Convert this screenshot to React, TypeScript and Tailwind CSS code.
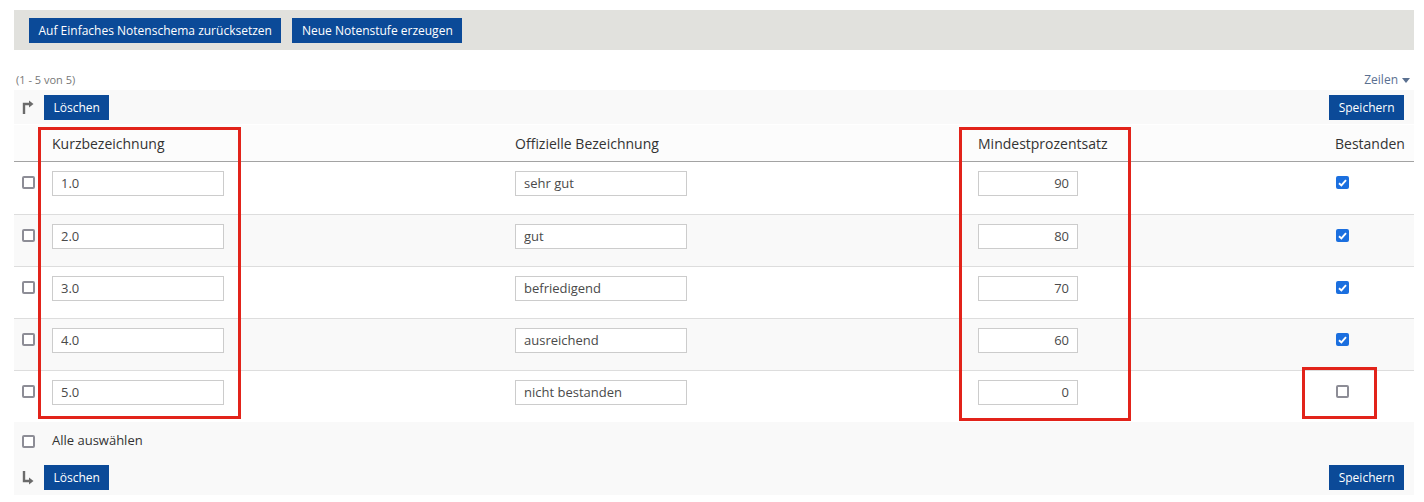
import React from "react";

const rows = [
  { k: "1.0", o: "sehr gut", m: "90", b: true, bg: "bg-white" },
  { k: "2.0", o: "gut", m: "80", b: true, bg: "bg-[#f9f9f9]" },
  { k: "3.0", o: "befriedigend", m: "70", b: true, bg: "bg-white" },
  { k: "4.0", o: "ausreichend", m: "60", b: true, bg: "bg-[#f9f9f9]" },
  { k: "5.0", o: "nicht bestanden", m: "0", b: false, bg: "bg-white" },
];

const Btn = ({ children }: { children: React.ReactNode }) => (
  <button className="h-[25px] px-[9.5px] bg-[#0b4a98] text-white text-[12px] leading-[25px] whitespace-nowrap">
    {children}
  </button>
);

const Cb = ({ checked = false }: { checked?: boolean }) =>
  checked ? (
    <span className="block w-[13px] h-[13px] rounded-[2px] bg-[#1b6fdf] flex items-center justify-center">
      <svg width="9" height="8" viewBox="0 0 9 8">
        <path d="M1 4.2 L3.4 6.4 L8 1.2" stroke="white" strokeWidth="1.9" fill="none" />
      </svg>
    </span>
  ) : (
    <span className="block w-[13px] h-[13px] rounded-[2px] border-2 border-[#8d8d96] bg-white" />
  );

const ArrowUp = () => (
  <svg width="12" height="14" viewBox="0 0 12 14" className="block">
    <path d="M2 14 V4 H7" stroke="#6b6b6b" strokeWidth="2.4" fill="none" />
    <path d="M7 0.5 L11.5 4 L7 7.5 Z" fill="#6b6b6b" />
  </svg>
);

const ArrowDown = () => (
  <svg width="12" height="14" viewBox="0 0 12 14" className="block">
    <path d="M2 0 V10 H7" stroke="#6b6b6b" strokeWidth="2.4" fill="none" />
    <path d="M7 6.5 L11.5 10 L7 13.5 Z" fill="#6b6b6b" />
  </svg>
);

const inputCls =
  "h-[25px] border border-[#cccccc] bg-white text-[13px] text-[#4a4a4a] px-2 outline-none";

export default function App() {
  return (
    <div
      className="relative w-[1424px] h-[502px] bg-white pl-[14px] pr-[10px] pt-[10px] text-[#333]"
      style={{ fontFamily: '"Open Sans", "Noto Sans", sans-serif' }}
    >
      {/* toolbar */}
      <div className="h-[40px] bg-[#e1e1dd] flex items-center gap-[11px] px-[15px]">
        <Btn>Auf Einfaches Notenschema zurücksetzen</Btn>
        <Btn>Neue Notenstufe erzeugen</Btn>
      </div>

      {/* info line */}
      <div className="h-[40px] flex items-end justify-between">
        <span className="text-[11px] leading-[16px] text-[#777] pl-[2px] pb-[2px]">(1 - 5 von 5)</span>
        <span className="text-[12px] leading-[16px] text-[#5a7090] flex items-center gap-[4px] pr-[4px] pb-[2px]">
          Zeilen
          <svg width="8" height="5" viewBox="0 0 8 5">
            <path d="M0 0 H8 L4 5 Z" fill="#5a7090" />
          </svg>
        </span>
      </div>

      {/* top actions */}
      <div className="h-[34px] bg-[#f9f9f9] flex items-center justify-between pl-[8px] pr-[10px]">
        <div className="flex items-center gap-[10px]">
          <ArrowUp />
          <Btn>Löschen</Btn>
        </div>
        <Btn>Speichern</Btn>
      </div>

      {/* header */}
      <div className="mt-[1px] h-[37px] bg-[#fcfcfc] border-b border-[#a3a3a3] grid grid-cols-[30px_463px_463px_357px_1fr] items-center text-[14px] text-[#333]">
        <div />
        <div className="pl-2">Kurzbezeichnung</div>
        <div className="pl-2">Offizielle Bezeichnung</div>
        <div className="pl-2">Mindestprozentsatz</div>
        <div className="pl-2">Bestanden</div>
      </div>

      {/* rows */}
      {rows.map((r, i) => (
        <div
          key={r.k}
          className={`h-[52px] ${r.bg} ${i > 0 ? "border-t border-[#dddddd]" : ""} grid grid-cols-[30px_463px_463px_357px_1fr] items-start`}
        >
          <div className="pl-[8px] pt-[14px]">
            <Cb />
          </div>
          <div className="pl-2 pt-[8px]">
            <input className={`${inputCls} w-[172px]`} defaultValue={r.k} />
          </div>
          <div className="pl-2 pt-[8px]">
            <input className={`${inputCls} w-[172px]`} defaultValue={r.o} />
          </div>
          <div className="pl-2 pt-[8px]">
            <input className={`${inputCls} w-[100px] text-right`} defaultValue={r.m} />
          </div>
          <div className="pl-[9px] pt-[14px]">
            <Cb checked={r.b} />
          </div>
        </div>
      ))}

      {/* select all */}
      <div className="h-[38px] bg-[#f9f9f9] flex items-center">
        <div className="w-[30px] pl-[8px]">
          <Cb />
        </div>
        <span className="pl-2 text-[13px] text-[#333]">Alle auswählen</span>
      </div>

      {/* bottom actions */}
      <div className="h-[35px] bg-[#f9f9f9] flex items-center justify-between pl-[8px] pr-[10px]">
        <div className="flex items-center gap-[10px]">
          <ArrowDown />
          <Btn>Löschen</Btn>
        </div>
        <Btn>Speichern</Btn>
      </div>

      {/* red highlight boxes */}
      <div className="absolute left-[38px] top-[127px] w-[203px] h-[292px] border-[3px] border-[#e2231a] pointer-events-none" />
      <div className="absolute left-[959px] top-[127px] w-[172px] h-[294px] border-[3px] border-[#e2231a] pointer-events-none" />
      <div className="absolute left-[1302px] top-[367px] w-[75px] h-[52px] border-[3px] border-[#e2231a] pointer-events-none" />
    </div>
  );
}
